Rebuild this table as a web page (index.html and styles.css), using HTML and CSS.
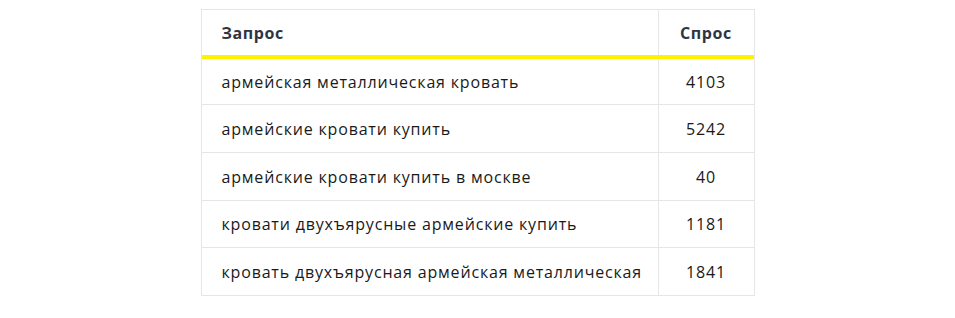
FILE: index.html
```html
<!DOCTYPE html>
<html lang="ru">
<head>
<meta charset="utf-8">
<link rel="stylesheet" href="styles.css">
</head>
<body>
<div class="table">
  <div class="row head">
    <div class="cell q">Запрос</div>
    <div class="cell d">Спрос</div>
  </div>
  <div class="row">
    <div class="cell q">армейская металлическая кровать</div>
    <div class="cell d">4103</div>
  </div>
  <div class="row">
    <div class="cell q">армейские кровати купить</div>
    <div class="cell d">5242</div>
  </div>
  <div class="row">
    <div class="cell q">армейские кровати купить в москве</div>
    <div class="cell d">40</div>
  </div>
  <div class="row">
    <div class="cell q">кровати двухъярусные армейские купить</div>
    <div class="cell d">1181</div>
  </div>
  <div class="row">
    <div class="cell q">кровать двухъярусная армейская металлическая</div>
    <div class="cell d">1841</div>
  </div>
</div>
</body>
</html>
```

FILE: styles.css
```css
html, body {
  margin: 0;
  padding: 0;
  background: #fff;
}
body {
  font-family: "Open Sans", "Liberation Sans", sans-serif;
  font-size: 16px;
  letter-spacing: 0.82px;
  color: #1a1a1a;
}
.table {
  width: 554px;
  margin: 9px auto 0;
  border: 1px solid #e6e6e6;
  box-sizing: border-box;
}
.row {
  display: grid;
  grid-template-columns: 457px 1fr;
  height: 48px;
  border-bottom: 1px solid #e6e6e6;
  box-sizing: border-box;
}
.row:last-child {
  border-bottom: none;
  height: 47px;
}
.row.head {
  height: 49px;
  border-bottom: 4px solid #fff200;
  color: #2e3441;
  font-weight: 700;
  font-size: 16px;
  letter-spacing: 0.6px;
}
.row.head + .row {
  height: 46px;
}
.row:nth-child(5) {
  height: 47px;
}
.cell {
  display: flex;
  align-items: center;
  line-height: 20px;
}
.cell.q {
  padding-left: 20px;
  border-right: 1px solid #e6e6e6;
}
.cell.d {
  justify-content: center;
}
```
